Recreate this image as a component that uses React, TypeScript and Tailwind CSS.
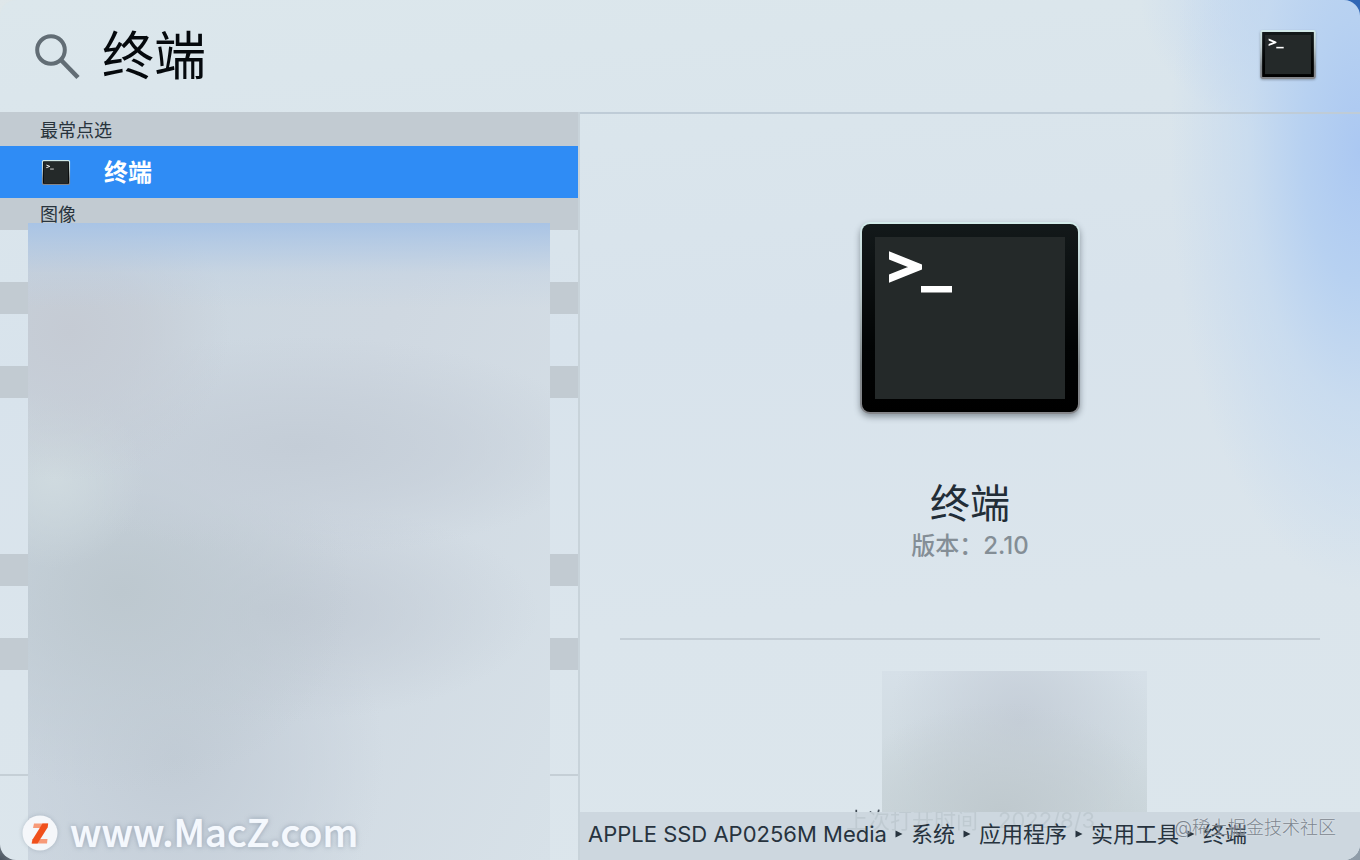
import { Fragment, useState } from "react";

function SearchIcon() {
  return (
    <svg viewBox="0 0 48 48" className="size-12 shrink-0" fill="none" stroke="#626d75" strokeWidth="4" aria-hidden="true">
      <circle cx="19" cy="18" r="13.8" />
      <path d="M29 28L46 45.5" strokeWidth="4.6" />
    </svg>
  );
}

type TerminalIconProps = { className: string; id: string; edge: number; radius: number; frame: number };

function TerminalIcon({ className, id, edge, radius, frame }: TerminalIconProps) {
  return (
    <svg viewBox="0 0 216 188" className={className} overflow="visible" aria-hidden="true">
      <defs>
        <linearGradient id={`${id}-edge`} x1="0" y1="0" x2="0" y2="1">
          <stop offset="0" stopColor="#d3ebea" />
          <stop offset="0.35" stopColor="#bccbcd" />
          <stop offset="0.75" stopColor="#7e8589" />
          <stop offset="1" stopColor="#85868a" />
        </linearGradient>
        <linearGradient id={`${id}-frame`} x1="0" y1="0" x2="0" y2="1">
          <stop offset="0" stopColor="#13191a" />
          <stop offset="0.65" stopColor="#020404" />
          <stop offset="1" stopColor="#000000" />
        </linearGradient>
      </defs>
      <rect x={-edge} y={-edge} width={216 + edge * 2} height={188 + edge * 2} rx={radius + edge} fill={`url(#${id}-edge)`} />
      <rect width="216" height="188" rx={radius} fill={`url(#${id}-frame)`} />
      <rect x={frame} y={frame} width={216 - frame * 2} height={188 - frame * 2} fill="#242929" />
      <svg x="27" y="26" width="33" height="34" viewBox="0 0 33 34">
        <path d="M-10 1.4L29 17L-10 32.6" fill="none" stroke="#fff" strokeWidth="7.6" />
      </svg>
      <rect x="59" y="62" width="31" height="6.5" fill="#fff" />
    </svg>
  );
}

function Section({ title = "" }: { title?: string }) {
  return (
    <h2 className="flex h-8 items-center bg-[#c2cbd2] pt-0.5 pl-10 text-lg leading-6 text-[#29343d]">{title}</h2>
  );
}

function Rows({ count }: { count: number }) {
  return (
    <ul>
      {Array.from({ length: count }, (_, i) => (
        <li key={i} className="h-13" />
      ))}
    </ul>
  );
}

const path = ["APPLE SSD AP0256M Media", "系统", "应用程序", "实用工具", "终端"];

export default function App() {
  const [query, setQuery] = useState("终端");

  return (
    <div className="min-h-screen bg-[radial-gradient(circle_60px_at_100%_0px,#2f66b5_0%,#2f66b5_60%,transparent_100%),radial-gradient(circle_60px_at_0%_100%,#4b5560_0%,transparent_100%),linear-gradient(100deg,#dfe7ea_0%,#8f9ca8_100%)] font-['Inter','Noto_Sans_CJK_SC',sans-serif]">
      <div className="relative flex min-h-screen flex-col overflow-hidden rounded-2xl bg-[radial-gradient(ellipse_190px_440px_at_100%_150px,#abc8f2_0%,#b7d1f1_30%,rgba(196,217,240,0.75)_58%,transparent_100%),radial-gradient(ellipse_220px_150px_at_100%_0px,#b3cef3_0%,transparent_100%),linear-gradient(175deg,#dce7ec_0%,#d8e3ec_40%,#dbe5ec_70%,#dce6ec_100%)]">
        <header className="flex h-28 items-center pr-[46px] pl-8">
          <label htmlFor="query" aria-label="搜索">
            <SearchIcon />
          </label>
          <input
            id="query"
            value={query}
            onChange={(e) => setQuery(e.target.value)}
            className="ml-[22px] h-20 min-w-0 flex-1 bg-transparent pb-2 text-[52px] leading-none text-[#05090d] outline-none"
          />
          <TerminalIcon id="top" edge={8} radius={2} frame={12} className="mb-1 h-[45px] w-[52px] drop-shadow-[0_1px_1px_rgba(60,70,80,0.4)]" />
        </header>

        <div className="flex flex-1">
          <aside className="relative w-[580px] shrink-0 border-r-2 border-[#c8d3da]">
            <div className="bg-[#c2cbd2] pt-0.5">
              <Section title="最常点选" />
            </div>
            <button type="button" className="flex h-13 w-full items-center bg-[#2f8cf5] pl-[43px] text-left text-2xl font-bold text-white">
              <TerminalIcon id="row" edge={9} radius={4} frame={6} className="h-[23px] w-[26px]" />
              <span className="ml-[35px] pt-0.5">终端</span>
            </button>
            <Section title="图像" />
            <Rows count={1} />
            <Section />
            <Rows count={1} />
            <Section />
            <Rows count={3} />
            <Section />
            <Rows count={1} />
            <Section />
            <Rows count={2} />
            <hr className="border-t-2 border-[#c5cfd6]" />

            <div className="absolute top-[111px] right-7 bottom-0 left-7 bg-[linear-gradient(180deg,#a9c4e5_0px,rgba(174,199,229,0.75)_20px,rgba(190,208,228,0.35)_50px,transparent_85px),radial-gradient(ellipse_160px_150px_at_8%_17%,#c5cbd4_0%,rgba(197,203,212,0.7)_45%,transparent_100%),radial-gradient(ellipse_90px_90px_at_5%_40%,#cfdadf_0%,transparent_100%),radial-gradient(ellipse_300px_110px_at_52%_35%,#c4cdd7_0%,rgba(198,207,217,0.7)_50%,transparent_100%),radial-gradient(ellipse_230px_200px_at_18%_58%,#bdc8cf_0%,rgba(191,202,210,0.7)_45%,transparent_100%),radial-gradient(ellipse_260px_110px_at_48%_61%,#c2cbd5_0%,transparent_100%),radial-gradient(ellipse_210px_220px_at_28%_84%,#c2ccd6_0%,rgba(198,208,218,0.7)_50%,transparent_100%),linear-gradient(115deg,#c9d6e0_0%,#cfd8e1_50%,#d7e1e8_100%)]" />

            <div className="absolute bottom-0 left-[22px] flex h-[54px] items-center font-['Noto_Sans_CJK_SC',sans-serif]">
              <svg viewBox="0 0 36 36" className="size-9 drop-shadow-[0_0_2px_rgba(120,135,150,0.4)]" aria-hidden="true">
                <circle cx="18" cy="18" r="17.5" fill="#f5f7fa" />
                <path d="M12 8.5H26L25 13H11z" fill="#f79a78" />
                <path d="M10.5 24H25.5L25 28.5H9.5z" fill="#f79a78" />
                <path d="M20.5 8.5H26.2L25.6 12.5L15.5 28.5H9.8L10.6 24.5z" fill="#f0501c" />
              </svg>
              <span className="ml-3 pb-1 text-[38px] leading-none font-medium text-[#f4f8fd] [text-shadow:0_0_1px_#f4f8fd,0_0_5px_rgba(100,115,135,0.6)]">www.MacZ.com</span>
            </div>
          </aside>

          <main className="relative flex min-w-0 flex-1 flex-col border-t-2 border-[#bfccd7]">
            <div className="flex flex-col items-center px-10 pt-[110px]">
              <TerminalIcon id="detail" edge={2} radius={8} frame={13} className="h-[188px] w-[216px] drop-shadow-[0_3px_3px_rgba(40,50,60,0.45)]" />
              <h1 className="mt-[68px] text-[40px] leading-12 text-[#222d37]">终端</h1>
              <p className="text-2xl leading-9 font-medium text-[#848e96]">版本：2.10</p>
              <hr className="mt-[74px] w-full border-t-2 border-[#c4ced6]" />
            </div>

            <footer className="relative mt-auto flex h-12 items-center bg-[#cdd7df] pb-1 pl-2 text-[22px] text-[#27333e]">
              <p className="absolute bottom-6 left-[266px] flex gap-5 bg-[linear-gradient(#3f4a54_8px,#bfcad1_8px)] bg-clip-text leading-8 whitespace-nowrap text-transparent">
                <span>上次打开时间</span>
                <span>2022/8/3</span>
              </p>
              <div className="absolute bottom-12 left-[302px] h-[141px] w-[265px] bg-[radial-gradient(ellipse_160px_110px_at_45%_100%,#bfc9ce_0%,rgba(193,203,208,0.6)_50%,transparent_100%),radial-gradient(ellipse_130px_130px_at_52%_35%,#c5ced8_0%,transparent_100%),linear-gradient(180deg,#d6e0e8_0%,#ccd7dc_100%)]" />
              <nav aria-label="路径" className="relative">
                <ol className="flex items-center gap-2 whitespace-nowrap">
                  {path.map((name, i) => (
                    <Fragment key={name}>
                      {i > 0 && (
                        <li aria-hidden="true">
                          <svg viewBox="0 0 8 8" className="size-2" fill="#27333e">
                            <path d="M0.5 0.5L7.5 4L0.5 7.5z" />
                          </svg>
                        </li>
                      )}
                      <li>
                        <a href="#path">{name}</a>
                      </li>
                    </Fragment>
                  ))}
                </ol>
              </nav>
              <span className="absolute right-6 bottom-[18px] text-lg leading-7 font-light whitespace-nowrap text-[#7c858e] [text-shadow:0_0_2px_rgba(255,255,255,0.6)]">@稀土掘金技术社区</span>
            </footer>
          </main>
        </div>
      </div>
    </div>
  );
}
